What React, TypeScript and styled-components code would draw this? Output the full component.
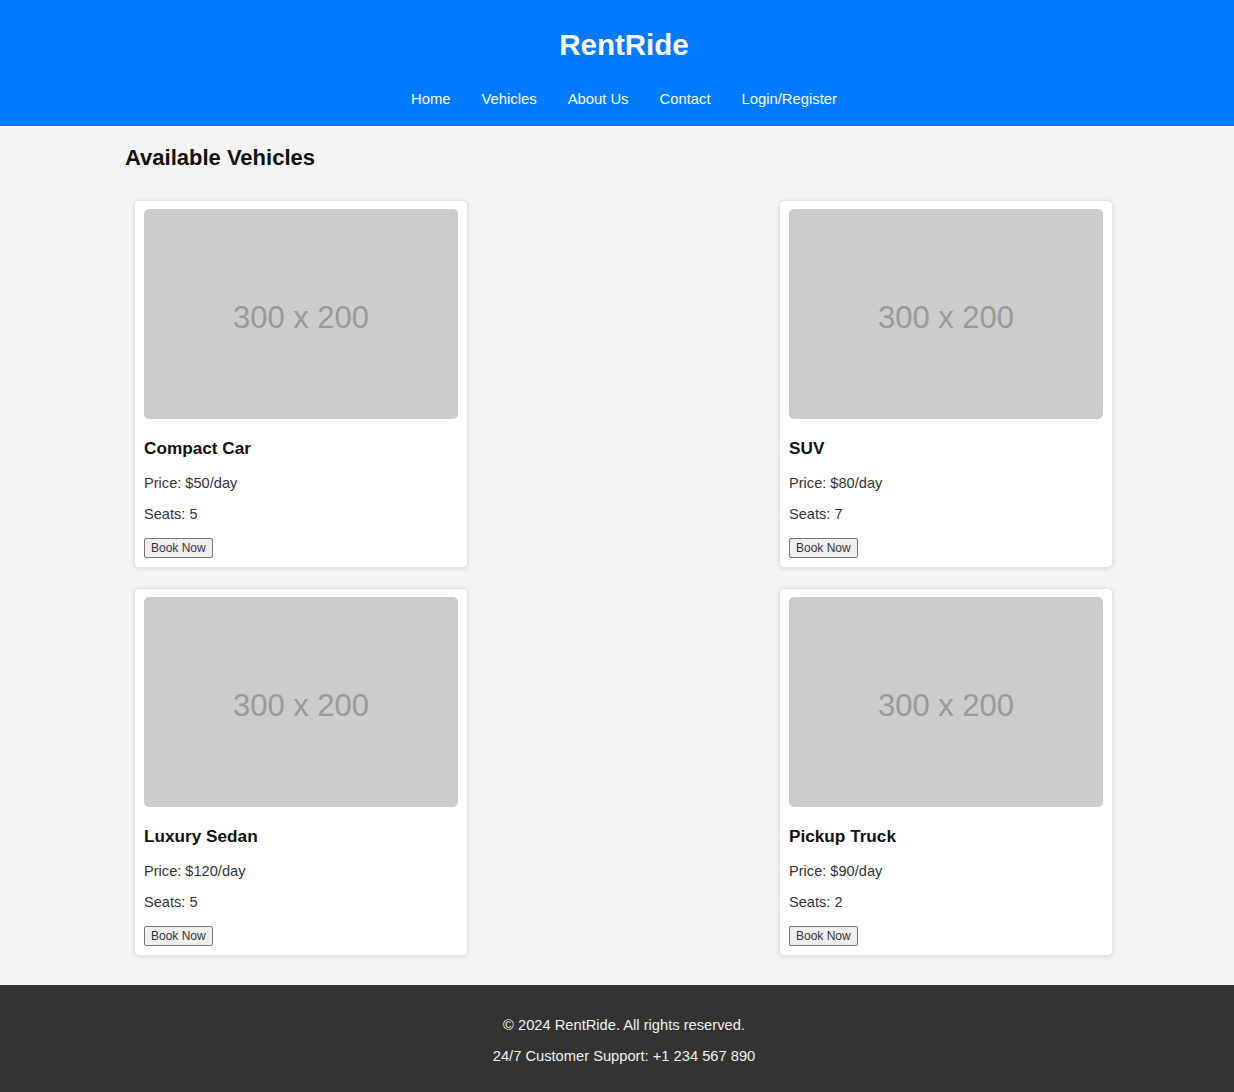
import React from 'react';
import styled, { createGlobalStyle } from 'styled-components';

const GlobalStyle = createGlobalStyle`
  html, body {
    margin: 0;
    padding: 0;
    background: #f4f4f4;
    font-family: "Liberation Sans", Arial, sans-serif;
  }
  * {
    box-sizing: border-box;
  }
`;

const Header = styled.header`
  background: #007bff;
  color: #fff;
  text-align: center;
  padding: 28px 0 18px 14px;
`;

const Logo = styled.h1`
  margin: 0;
  font-size: 29.5px;
  line-height: 34px;
  font-weight: bold;
`;

const Nav = styled.nav`
  display: flex;
  justify-content: center;
  gap: 31px;
  margin-top: 29px;
`;

const NavLink = styled.a`
  color: #fff;
  text-decoration: none;
  font-size: 14.8px;
  line-height: 17px;
`;

const Main = styled.main`
  padding: 19px 121px 29px 125px;
`;

const Heading = styled.h2`
  margin: 0 0 29px;
  font-size: 22px;
  line-height: 26px;
  font-weight: bold;
  color: #111;
`;

const Grid = styled.div`
  display: grid;
  grid-template-columns: repeat(2, 334px);
  justify-content: space-between;
  row-gap: 20px;
  padding-left: 9px;
`;

const Card = styled.div`
  background: #fff;
  border: 1px solid #e4e4e4;
  border-radius: 5px;
  box-shadow: 0 1px 4px rgba(0, 0, 0, 0.1);
  padding: 8px 9px 9px;
`;

const Placeholder = styled.div`
  height: 210px;
  padding-top: 7px;
  background: #cccccc;
  border-radius: 5px;
  display: flex;
  align-items: center;
  justify-content: center;
  color: #9a9a9a;
  font-size: 31px;
`;

const Name = styled.h3`
  margin: 20px 0 0;
  font-size: 17.2px;
  line-height: 19px;
  font-weight: bold;
  color: #111;
`;

const Detail = styled.p<{ $gap: number }>`
  margin: ${(p) => p.$gap}px 0 0;
  font-size: 14.6px;
  line-height: 17px;
  color: #333;
`;

const BookButton = styled.button`
  display: block;
  margin-top: 15px;
  height: 20px;
  padding: 0 6px;
  font-family: "Liberation Sans", Arial, sans-serif;
  font-size: 12px;
  color: #333;
  background: #efefef;
  border: 1px solid #767676;
  border-radius: 2px;
`;

const Footer = styled.footer`
  background: #333;
  color: #f2f2f2;
  text-align: center;
  padding: 32px 0 28px 14px;
`;

const FooterLine = styled.p<{ $gap: number }>`
  margin: ${(p) => p.$gap}px 0 0;
  font-size: 14.7px;
  line-height: 17px;
`;

const vehicles = [
  { id: 1, name: 'Compact Car', price: 50, seats: 5 },
  { id: 2, name: 'SUV', price: 80, seats: 7 },
  { id: 3, name: 'Luxury Sedan', price: 120, seats: 5 },
  { id: 4, name: 'Pickup Truck', price: 90, seats: 2 },
];

export default function App() {
  return (
    <>
      <GlobalStyle />
      <Header>
        <Logo>RentRide</Logo>
        <Nav>
          <NavLink href="#">Home</NavLink>
          <NavLink href="#">Vehicles</NavLink>
          <NavLink href="#">About Us</NavLink>
          <NavLink href="#">Contact</NavLink>
          <NavLink href="#">Login/Register</NavLink>
        </Nav>
      </Header>
      <Main>
        <Heading>Available Vehicles</Heading>
        <Grid>
          {vehicles.map((v) => (
            <Card key={v.id}>
              <Placeholder>300 x 200</Placeholder>
              <Name>{v.name}</Name>
              <Detail $gap={17}>Price: ${v.price}/day</Detail>
              <Detail $gap={14}>Seats: {v.seats}</Detail>
              <BookButton>Book Now</BookButton>
            </Card>
          ))}
        </Grid>
      </Main>
      <Footer>
        <FooterLine $gap={0}>© 2024 RentRide. All rights reserved.</FooterLine>
        <FooterLine $gap={14}>24/7 Customer Support: +1 234 567 890</FooterLine>
      </Footer>
    </>
  );
}
